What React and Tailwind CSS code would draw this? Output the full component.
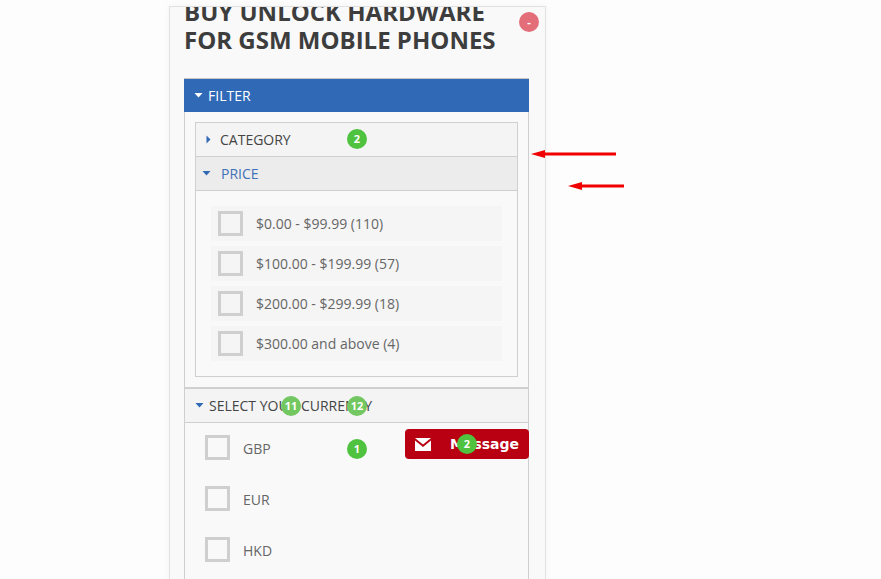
const priceOptions = [
  "$0.00 - $99.99 (110)",
  "$100.00 - $199.99 (57)",
  "$200.00 - $299.99 (18)",
  "$300.00 and above (4)",
]

const currencies = ["GBP", "EUR", "HKD"]

const Badge = ({ className, children }) => (
  <span className={`absolute flex h-5 w-5 items-center justify-center rounded-full text-[11px] font-bold text-white ${className}`}>
    {children}
  </span>
)

const Caret = ({ className }) => (
  <svg className={className} width="9" height="5" viewBox="0 0 9 5">
    <path d="M0.5 0H8.5L4.5 4.5Z" fill="currentColor" />
  </svg>
)

const Arrow = ({ className, width }) => (
  <svg className={`absolute ${className}`} width={width} height="10" viewBox={`0 0 ${width} 10`}>
    <path d={`M0 5L14 1V3.5H${width}V6.5H14V9Z`} fill="#f00000" />
  </svg>
)

const App = () => {
  return (
    <div className="relative h-[579px] w-[881px] overflow-hidden bg-[#fdfdfd] font-['Open_Sans',sans-serif]">
      {/* Card */}
      <div className="ml-[169px] mt-[6px] h-[600px] w-[377px] overflow-hidden border border-[#e2e2e2] bg-[#f9f9f9] shadow-[0_0_8px_rgba(0,0,0,0.04)]">
        <div className="pl-[14px] pr-[16px]">
          <h1 className="mt-[-9px] w-[330px] text-[24px] font-bold uppercase leading-[28px] text-[#3d3d3d]">
            Buy unlock hardware for GSM mobile phones
          </h1>

          {/* Filter */}
          <div className="mt-[24px] flex h-[34px] items-center gap-[5px] border-t border-[#c4c4c4] bg-[#3069b6] pl-[10px] text-[14px] uppercase text-white">
            <Caret />
            <span>Filter</span>
          </div>
          <div className="border-x border-[#cfcfcf] px-[10px] pb-[10px] pt-[10px]">
            <div className="border border-[#cfcfcf]">
              <div className="flex h-[33px] items-center bg-[#f4f4f4] pl-[10px] text-[14px] uppercase text-[#444]">
                <svg className="text-[#3069b6]" width="5" height="9" viewBox="0 0 5 9">
                  <path d="M0.5 0.5V8.5L4.5 4.5Z" fill="currentColor" />
                </svg>
                <span className="ml-[9px]">Category</span>
              </div>
              <div className="flex h-[35px] items-center border-y border-[#cfcfcf] bg-[#ececec] pl-[6px] text-[14px] uppercase text-[#3f72b8]">
                <Caret className="text-[#3069b6]" />
                <span className="ml-[10px]">Price</span>
              </div>
              <div className="flex flex-col gap-[5px] px-[15px] pb-[15px] pt-[15px]">
                {priceOptions.map((option) => (
                  <label key={option} className="flex h-[35px] items-center bg-[#f5f5f5] pl-[7px] text-[14px] text-[#666]">
                    <span className="h-[25px] w-[25px] border-[3px] border-[#cfcfcf]" />
                    <span className="ml-[13px]">{option}</span>
                  </label>
                ))}
              </div>
            </div>
          </div>

          {/* Currency */}
          <div className="h-[300px] border-x border-[#cfcfcf] border-t-2 border-t-[#d0d0d0]">
            <div className="flex h-[34px] items-center border-b border-[#cfcfcf] bg-[#f4f4f4] pl-[10px] text-[14px] uppercase text-[#444]">
              <Caret className="text-[#3069b6]" />
              <span className="ml-[5px]">Select your currency</span>
            </div>
            <div className="flex flex-col gap-[26px] pl-[20px] pt-[12px]">
              {currencies.map((currency) => (
                <label key={currency} className="flex items-center text-[14px] text-[#666]">
                  <span className="h-[25px] w-[25px] border-[3px] border-[#cfcfcf]" />
                  <span className="ml-[13px] pt-[2px]">{currency}</span>
                </label>
              ))}
            </div>
          </div>
        </div>
      </div>

      {/* Overlays */}
      <span className="absolute left-[519px] top-[12px] flex h-5 w-5 items-center justify-center rounded-full bg-[#e36e7a] text-[11px] font-bold text-white">-</span>
      <Badge className="left-[347px] top-[129px] bg-[#4fc23f]">2</Badge>
      <Badge className="left-[281px] top-[396px] bg-[#72c761]">11</Badge>
      <Badge className="left-[347px] top-[396px] bg-[#72c761]">12</Badge>
      <Badge className="left-[347px] top-[439px] bg-[#4fc23f]">1</Badge>

      <div className="absolute left-[405px] top-[429px] flex h-[30px] w-[124px] items-center rounded-[4px] bg-[#b80012] pl-[10px] font-['DejaVu_Sans',sans-serif] text-[14px] font-bold text-white">
        <svg width="16" height="13" viewBox="0 0 16 13">
          <path d="M0 0H16L8 6.5Z M0 2.5L8 9L16 2.5V13H0Z" fill="currentColor" />
        </svg>
        <span className="ml-[19px]">Message</span>
      </div>
      <Badge className="left-[457px] top-[434px] bg-[#4fc23f]">2</Badge>

      <Arrow className="left-[531px] top-[149px]" width={85} />
      <Arrow className="left-[568px] top-[181px]" width={56} />
    </div>
  )
}

export default App
